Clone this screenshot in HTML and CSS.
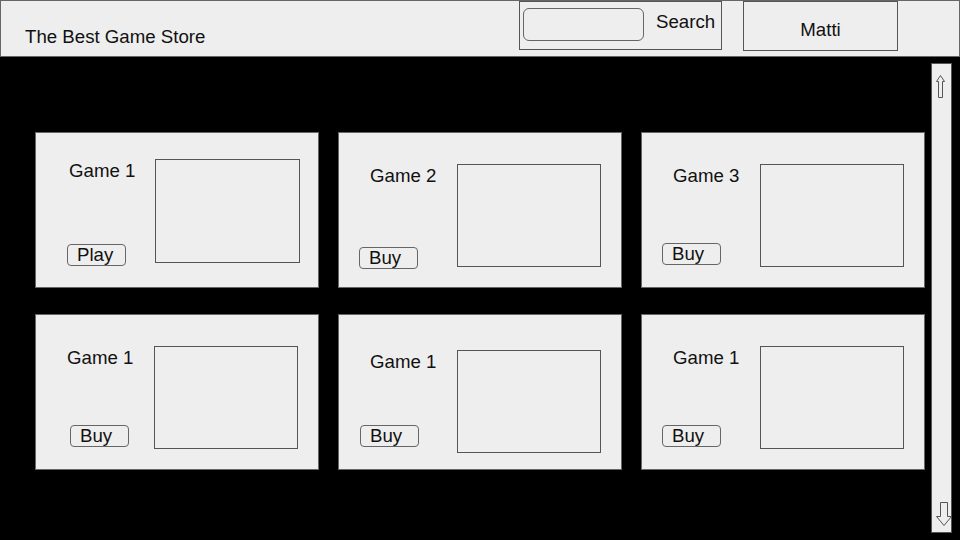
FILE: index.html
```html
<!DOCTYPE html>
<html lang="en">
<head>
    <meta charset="UTF-8">
    <meta name="viewport" content="width=device-width, initial-scale=1.0">
    <title>The Best Game Store</title>
    <link rel="stylesheet" href="styles.css">
</head>
<body>
    <header class="top-bar">
        <div class="store-name">The Best Game Store</div>
        <form class="search-box">
            <input type="text" class="search-input">
            <span class="search-label">Search</span>
        </form>
        <div class="user-box">Matti</div>
    </header>

    <main class="store">
        <div class="game-grid">
            <div class="game-card card-raised">
                <div class="game-info">
                    <div class="game-title">Game 1</div>
                    <button class="game-btn btn-play">Play</button>
                </div>
                <div class="game-cover"></div>
            </div>

            <div class="game-card">
                <div class="game-info">
                    <div class="game-title">Game 2</div>
                    <button class="game-btn btn-low">Buy</button>
                </div>
                <div class="game-cover"></div>
            </div>

            <div class="game-card">
                <div class="game-info">
                    <div class="game-title">Game 3</div>
                    <button class="game-btn">Buy</button>
                </div>
                <div class="game-cover"></div>
            </div>

            <div class="game-card">
                <div class="game-info">
                    <div class="game-title">Game 1</div>
                    <button class="game-btn btn-inset">Buy</button>
                </div>
                <div class="game-cover"></div>
            </div>

            <div class="game-card card-lowered">
                <div class="game-info">
                    <div class="game-title">Game 1</div>
                    <button class="game-btn btn-nudge">Buy</button>
                </div>
                <div class="game-cover"></div>
            </div>

            <div class="game-card">
                <div class="game-info">
                    <div class="game-title">Game 1</div>
                    <button class="game-btn">Buy</button>
                </div>
                <div class="game-cover"></div>
            </div>
        </div>

        <div class="scroll-bar">
            <svg class="arrow-up" viewBox="0 0 9 23" width="9" height="23">
                <path d="M4.5 0.5 L8.5 6.5 L6.5 6.5 L6.5 22.5 L2.5 22.5 L2.5 6.5 L0.5 6.5 Z" fill="none" stroke="#555" stroke-width="1"/>
            </svg>
            <svg class="arrow-down" viewBox="0 0 16 24" width="16" height="24">
                <path d="M4.5 0.5 L11.5 0.5 L11.5 14.5 L15.5 14.5 L8 23.5 L0.5 14.5 L4.5 14.5 Z" fill="none" stroke="#555" stroke-width="1"/>
            </svg>
        </div>
    </main>
</body>
</html>
```

FILE: styles.css
```css
/* Wireframe look: light grey boxes on black */
* {
    box-sizing: border-box;
}

body {
    margin: 0;
    height: 540px;
    overflow: hidden;
    background-color: #000000;
    font-family: 'Liberation Sans', Arial, sans-serif;
    font-size: 14pt;
    line-height: 20px;
    color: #111111;
}

.top-bar {
    display: flex;
    align-items: flex-start;
    height: 57px;
    background-color: #eeeeee;
    border: 1px solid #666666;
}

.store-name {
    margin: 26px 0 0 24px;
}

.search-box {
    display: flex;
    align-items: flex-start;
    width: 203px;
    height: 49px;
    margin: 0 0 0 auto;
    padding: 6px 0 0 3px;
    border: 1px solid #555555;
}

.search-input {
    width: 121px;
    height: 33px;
    margin: 0;
    background-color: #eeeeee;
    border: 1px solid #666666;
    border-radius: 6px;
}

.search-label {
    margin: 4px 0 0 12px;
}

.user-box {
    width: 155px;
    height: 50px;
    margin: 0 61px 0 21px;
    padding-top: 18px;
    text-align: center;
    border: 1px solid #555555;
}

.store {
    display: flex;
    align-items: flex-start;
}

.game-grid {
    display: grid;
    grid-template-columns: repeat(3, 284px);
    grid-auto-rows: 156px;
    column-gap: 19px;
    row-gap: 26px;
    margin: 75px 0 0 35px;
}

.game-card {
    display: flex;
    align-items: flex-start;
    padding: 31px 0 22px 20px;
    background-color: #eeeeee;
    border: 1px solid #666666;
}

.card-raised { padding-top: 26px; }
.card-lowered { padding-top: 35px; }

.game-info {
    display: flex;
    flex-direction: column;
    align-items: flex-start;
    align-self: stretch;
    width: 98px;
}

.card-raised .game-info { width: 99px; }

.game-title {
    margin: 2px 0 0 11px;
}

.card-raised .game-title { margin-left: 13px; }

.game-btn {
    width: 59px;
    height: 22px;
    margin-top: auto;
    padding: 0 0 0 9px;
    text-align: left;
    font-family: inherit;
    font-size: 14pt;
    line-height: 20px;
    color: #111111;
    background-color: #eeeeee;
    border: 1px solid #666666;
    border-radius: 4px;
}

.btn-play { margin: auto 0 -1px 11px; }
.btn-low { margin-bottom: -4px; }
.btn-inset { margin-left: 14px; }
.btn-nudge { margin-left: 1px; }

.game-cover {
    width: 144px;
    height: 103px;
    border: 1px solid #555555;
}

.card-raised .game-cover { width: 145px; height: 104px; }

.scroll-bar {
    display: flex;
    flex-direction: column;
    justify-content: space-between;
    align-items: center;
    width: 21px;
    height: 470px;
    margin: 6px 0 0 6px;
    padding: 11px 0 6px 0;
    background-color: #eeeeee;
    border: 1px solid #555555;
}

.arrow-up {
    margin-left: -2px;
}

.arrow-down {
    margin-left: 4px;
}
```
